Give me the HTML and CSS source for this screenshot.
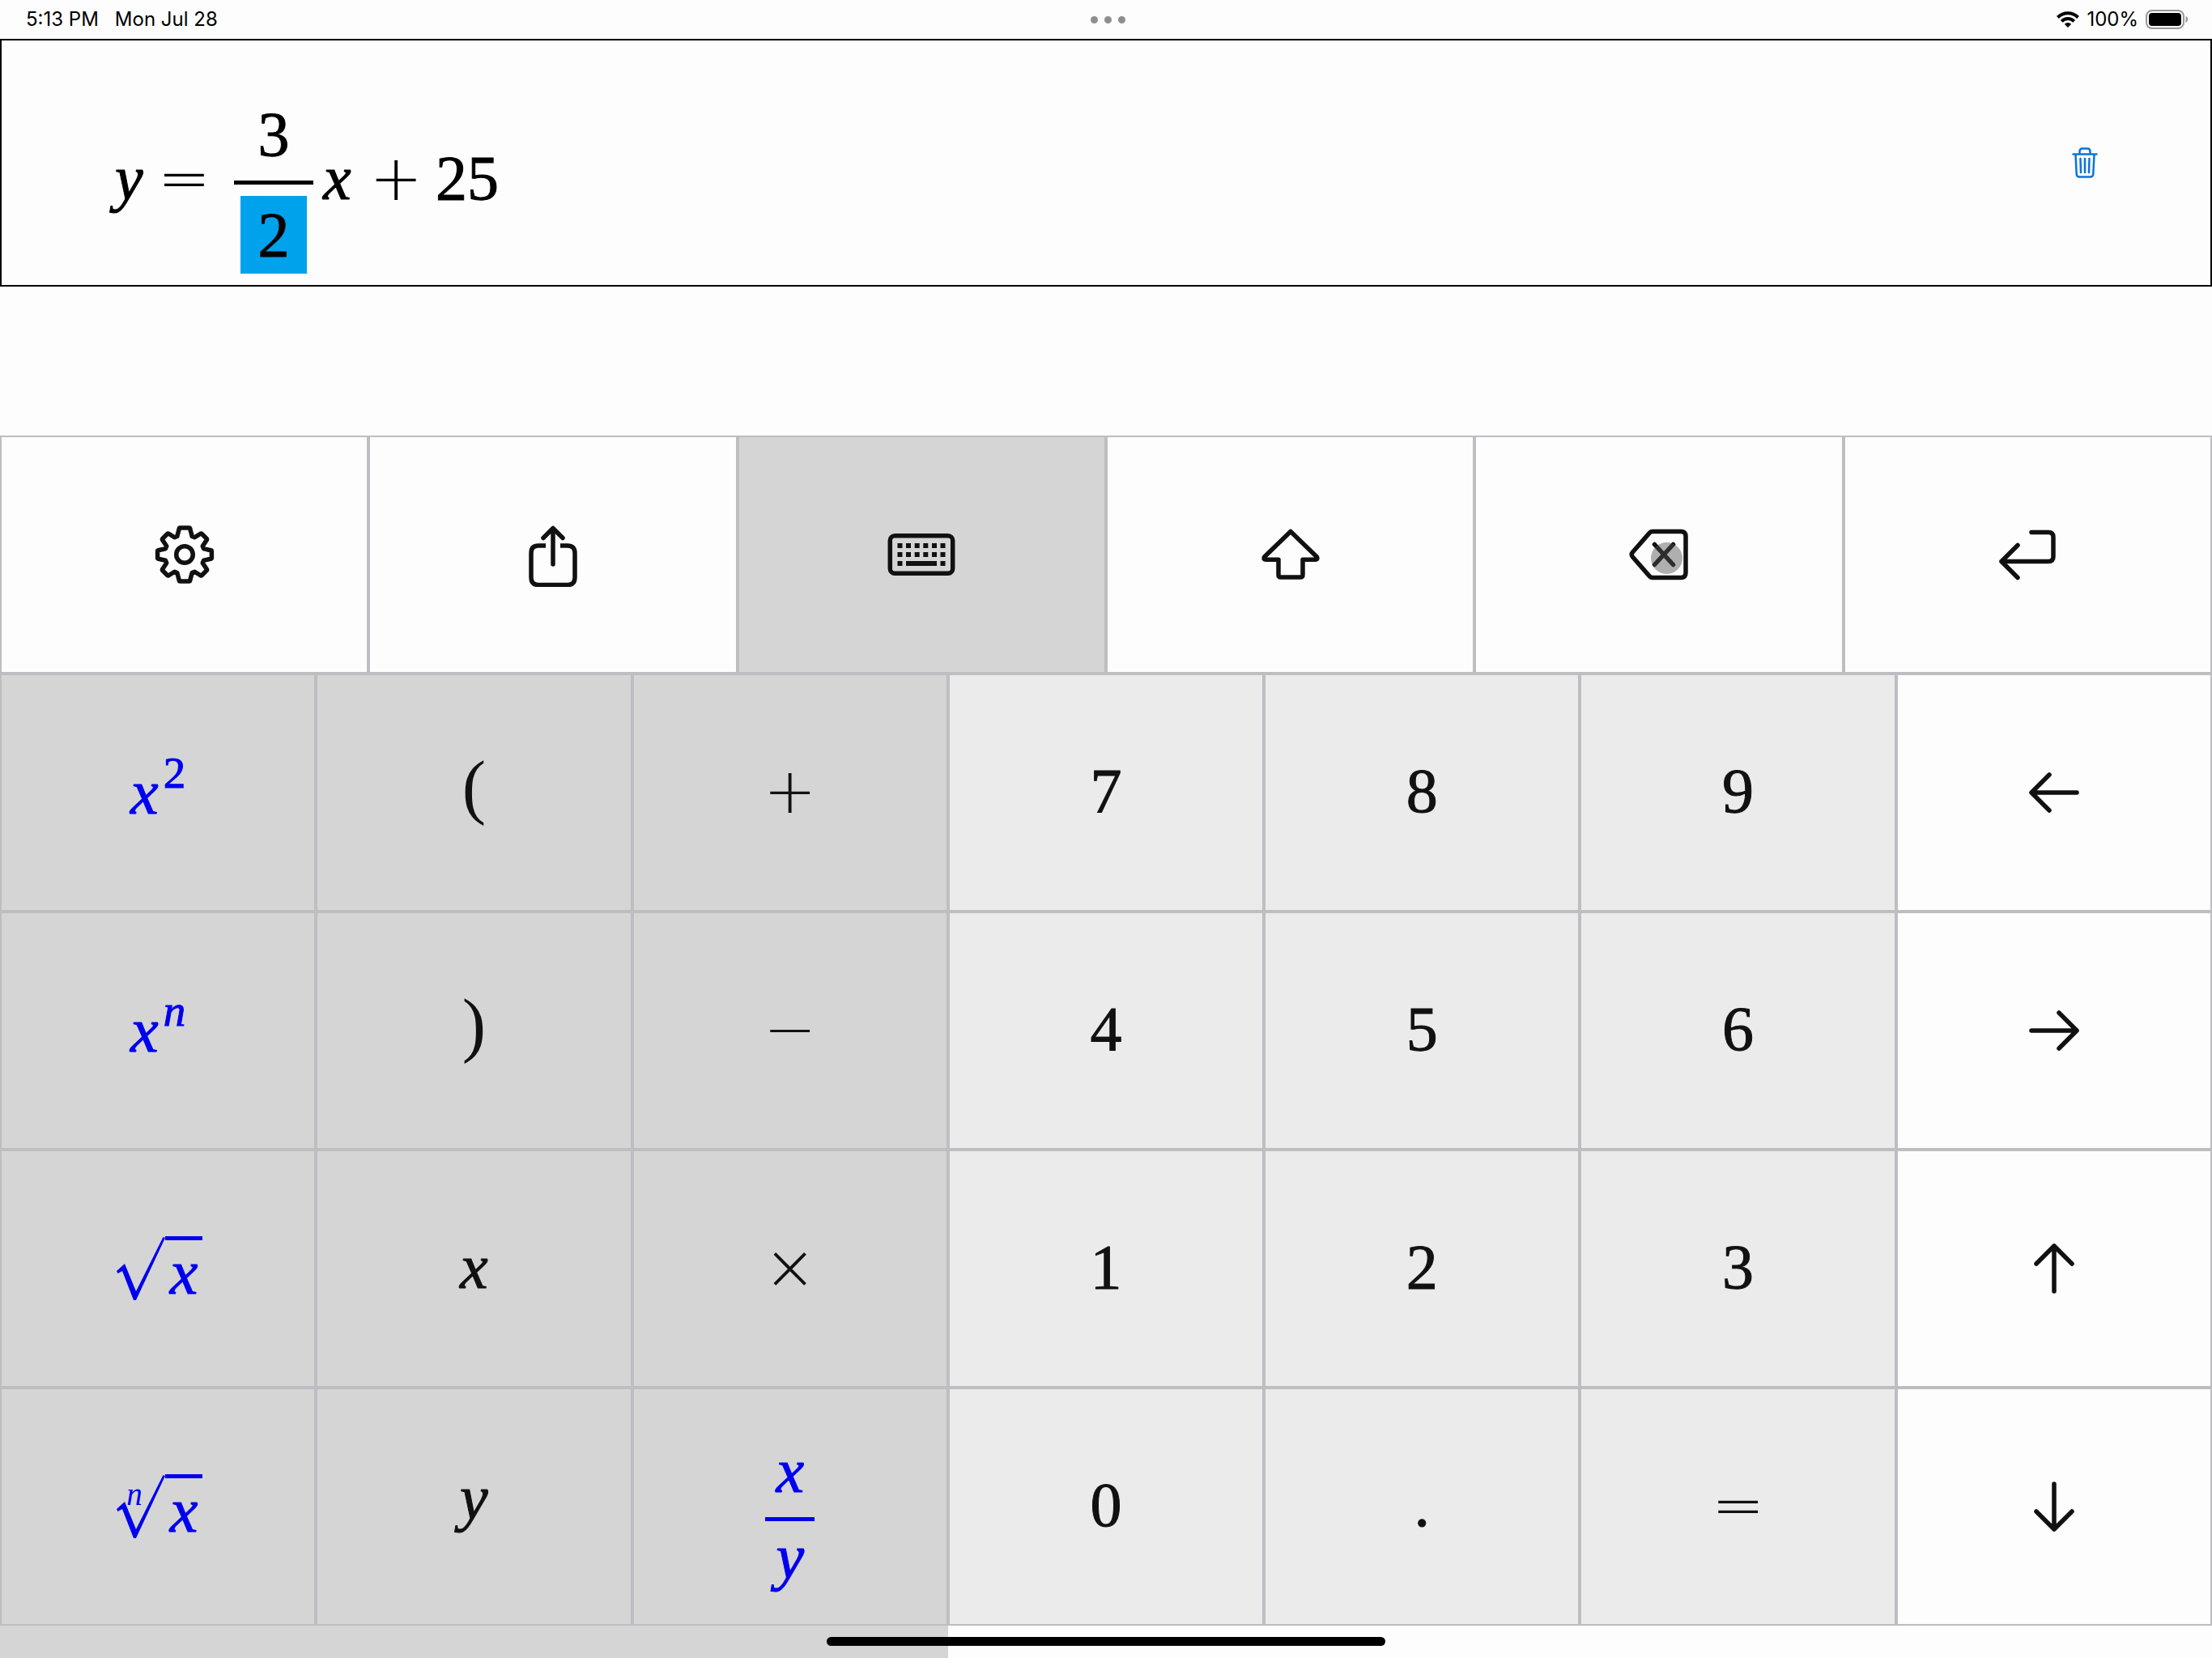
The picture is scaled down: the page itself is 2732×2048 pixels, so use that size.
FILE: index.html
```html
<!DOCTYPE html>
<html lang="en">
<head>
<meta charset="utf-8">
<meta name="viewport" content="width=device-width, initial-scale=1">
<title>Equation editor</title>
<link rel="stylesheet" href="styles.css">
</head>
<body>
<div class="app">
  <header class="status">
    <div class="status-left"><span>5:13 PM</span><span>Mon Jul 28</span></div>
    <div class="dots"><i></i><i></i><i></i></div>
    <div class="status-right">
      <svg width="28" height="20" viewBox="0 0 28 20" aria-hidden="true"><g fill="none" stroke="#000" stroke-width="4"><path d="M1.500 7.500a17.500 17.500 0 0 1 25 0"/><path d="M6.300 12.300a10.800 10.800 0 0 1 15.400 0"/></g><path d="M14 20l-4.200-4.300a6 6 0 0 1 8.400 0z"/></svg>
      <span>100%</span>
      <svg class="battery" width="54" height="24" viewBox="0 0 54 24" aria-hidden="true"><rect x="1" y="1" width="46" height="22" rx="7" fill="none" stroke="#999" stroke-width="2"/><rect x="4" y="4" width="40" height="16" rx="4"/><path d="M49.500 8c3.500 1 3.500 7 0 8z" fill="#999"/></svg>
    </div>
  </header>

  <main class="editor">
    <div class="equation">
      <span class="var">y</span>
      <span class="op eq">=</span>
      <span class="frac"><span class="num">3</span><span class="den"><mark>2</mark></span></span>
      <span class="var">x</span>
      <span class="op plus">+</span>
      <span>25</span>
    </div>
    <button class="trash" aria-label="Delete equation">
      <svg width="32" height="38" viewBox="0 0 32 38" fill="none" stroke="#0b74dc" stroke-width="2.500" stroke-linecap="round" stroke-linejoin="round"><path d="M1.500 8.500h29M9.500 8V5q0-3.500 3.500-3.500h6q3.500 0 3.500 3.500v3M4.500 9l1.200 24q.2 3.500 3.500 3.500h13.600q3.300 0 3.500-3.500l1.200-24M10.500 14l.5 17M16 14v17M21.500 14l-.5 17"/></svg>
    </button>
  </main>

  <section class="keyboard" aria-label="Math keyboard">
    <div class="tools">
      <button class="key" aria-label="Settings"><svg class="icon" viewBox="-38 -38 76 76"><circle r="10.300"/><path d="M-5.500-33h11q1 0 1.200 1l2.500 9.500 3.200 1.300 7.200-4.600q1-.5 1.800.3l5.700 5.700q.8.800.2 1.800l-5 7.600 1.300 3.200 8.800 1.900q1 .2 1 1.200v8.200q0 1-1 1.200l-8.800 1.900-1.300 3.200 5 7.600q.6 1-.2 1.800l-5.700 5.700q-.8.800-1.800.3l-7.200-4.600-3.200 1.300-2.500 9.500q-.2 1-1.200 1h-11q-1 0-1.200-1l-2.500-9.500-3.200-1.300-7.200 4.600q-1 .5-1.800-.3l-5.700-5.700q-.8-.8-.2-1.800l5-7.600-1.300-3.200-8.800-1.900q-1-.2-1-1.200v-8.200q0-1 1-1.200l8.800-1.900 1.300-3.200-5-7.600q-.6-1 .2-1.800l5.700-5.700q.8-.8 1.800-.3l7.200 4.600 3.200-1.300 2.500-9.500q.2-1 1.200-1z"/></svg></button>
      <button class="key" aria-label="Share"><svg class="icon tall" viewBox="-38 -40 76 80"><path d="M0-31V12M-12-20.500L0-32.500l12 12"/><path stroke-linecap="butt" d="M-9-11h-9q-9 0-9 9v30.500q0 9 9 9h36q9 0 9-9V-2q0-9-9-9H9"/></svg></button>
      <button class="key dark" aria-label="Keyboard" aria-pressed="true"><svg class="icon wide" viewBox="-43 -38 86 76"><rect x="-38.700" y="-23.200" width="77.400" height="46.400" rx="6"/><g class="solid"><path d="M-29.500-14h6v6h-6zM-19-14h6v6h-6zM-8.300-14h6v6h-6zM2.300-14h6v6h-6zM13-14h6v6h-6zM23.500-14h6v6h-6zM-29.500-3h6v6h-6zM-19-3h6v6h-6zM-8.300-3h6v6h-6zM2.300-3h6v6h-6zM13-3h6v6h-6zM23.500-3h6v6h-6zM-29.500 8h6v6h-6zM-19 8h38v6h-38zM23.500 8h6v6h-6z"/></g></svg></button>
      <button class="key" aria-label="Shift"><svg class="icon" viewBox="-38 -38 76 76"><path d="M0-28.500L32.500 3q1.500 3.200-1.500 3.200H15V25q0 3-3 3H-12q-3 0-3-3V6.200h-16q-3 0-1.500-3.200z"/></svg></button>
      <button class="key" aria-label="Backspace"><svg class="icon" viewBox="-38 -38 76 76"><path d="M-8-28.500h35q6 0 6 6v45q0 6-6 6H-8q-2 0-3.500-1.500L-32.500 3q-2.500-3 0-6l21-24q1.500-1.500 3.500-1.500zM-5.500-12.500l23 25M17.500-12.500l-23 25"/></svg><span class="touch"></span></button>
      <button class="key" aria-label="Return"><svg class="icon" viewBox="-38 -38 76 76"><path d="M5-27.500h21q6 0 6 6v24q0 6-6 6h-58M-12-11.500l-20 20 20 20"/></svg></button>
    </div>
    <div class="pad">
      <button class="key dark fn"><span class="var">x</span><sup>2</sup></button>
      <button class="key dark paren">(</button>
      <button class="key dark op">+</button>
      <button class="key light">7</button>
      <button class="key light">8</button>
      <button class="key light">9</button>
      <button class="key" aria-label="Left"><svg class="icon" viewBox="-38 -38 76 76"><path d="M28 0h-56M-6-22l-22 22 22 22"/></svg></button>

      <button class="key dark fn"><span class="var">x</span><sup class="var">n</sup></button>
      <button class="key dark paren">)</button>
      <button class="key dark op">−</button>
      <button class="key light">4</button>
      <button class="key light">5</button>
      <button class="key light">6</button>
      <button class="key" aria-label="Right"><svg class="icon" viewBox="-38 -38 76 76"><path d="M-28 0h56M6-22l22 22-22 22"/></svg></button>

      <button class="key dark fn"><span class="root"><svg width="60" height="80" viewBox="0 0 60 80"><path d="M0 43l10-9 14 34L57.500 1l2.500 1-36 77h-3L7 43l-5.500 3z"/></svg><span class="var radicand">x</span></span></button>
      <button class="key dark var">x</button>
      <button class="key dark op">×</button>
      <button class="key light">1</button>
      <button class="key light">2</button>
      <button class="key light">3</button>
      <button class="key" aria-label="Up"><svg class="icon" viewBox="-38 -38 76 76"><path d="M0 28v-56M-22-6l22-22 22 22"/></svg></button>

      <button class="key dark fn"><span class="root"><svg width="60" height="80" viewBox="0 0 60 80"><path d="M0 43l10-9 14 34L57.500 1l2.500 1-36 77h-3L7 43l-5.500 3z"/></svg><span class="var index">n</span><span class="var radicand">x</span></span></button>
      <button class="key dark var descender">y</button>
      <button class="key dark fn"><span class="ratio var"><span>x</span><span>y</span></span></button>
      <button class="key light">0</button>
      <button class="key light">.</button>
      <button class="key light op">=</button>
      <button class="key" aria-label="Down"><svg class="icon" viewBox="-38 -38 76 76"><path d="M0-28v56M-22 6l22 22 22-22"/></svg></button>
    </div>
  </section>
  <footer class="home"><span class="indicator"></span></footer>
</div>
</body>
</html>
```

FILE: styles.css
```css
* { box-sizing: border-box; }
body { margin: 0; background: #fdfdfd; color: #000; }

.app {
  min-height: 100vh;
  display: flex;
  flex-direction: column;
  font-family: "Liberation Serif", serif;
  font-size: 78px;
}

/* status bar */
.status {
  height: 48px;
  padding: 0 28px 0 32px;
  display: grid;
  grid-template-columns: 1fr auto 1fr;
  align-items: center;
  font: 400 24px/48px Inter, sans-serif;
  -webkit-text-stroke: 0;
}
.status-left { display: flex; gap: 20px; }
.status-right { display: flex; align-items: center; justify-content: flex-end; gap: 9px; }
.dots { display: flex; gap: 8px; }
.dots i { width: 9px; height: 9px; border-radius: 50%; background: #8e8e8e; }

/* equation */
.editor {
  border: 2px solid #000;
  display: flex;
  align-items: center;
  justify-content: space-between;
  padding: 0 133px 0 140px;
}
.equation {
  display: flex;
  align-items: center;
  padding: 51px 0 14px;
  line-height: 96px;
  -webkit-text-stroke: 1px currentColor;
}
.var { font-style: italic; }
.op { font-family: "DejaVu Sans", sans-serif; font-weight: 200; -webkit-text-stroke: 0; }
.eq { margin: 0 29px 0 18px; }
.plus { margin: 0 16px 0 23px; }
.frac { display: flex; flex-direction: column; align-items: center; margin-right: 12px; }
.num {
  width: 98px;
  text-align: center;
  padding: 17px 0 9px;
  border-bottom: 5px solid #000;
}
.den { padding-top: 14px; }
.den mark { display: block; width: 82px; text-align: center; background: #00a2ec; color: #000; }

.trash {
  width: 44px;
  height: 44px;
  display: flex;
  align-items: center;
  justify-content: center;
  padding: 0;
  border: 0;
  background: none;
}

/* keyboard */
.keyboard {
  margin-top: 184px;
  flex: 1;
  display: grid;
  grid-template-rows: 1fr 4fr;
}
.tools { display: grid; grid-template-columns: repeat(6, 1fr); }
.pad { display: grid; grid-template-columns: repeat(7, 1fr); grid-template-rows: repeat(4, 1fr); }
.key {
  position: relative;
  min-width: 0;
  min-height: 0;
  display: flex;
  align-items: center;
  justify-content: center;
  padding: 0;
  border: 2px solid #bebec2;
  background: #fdfdfd;
  color: #111;
  font-family: inherit;
  font-size: inherit;
  line-height: 96px;
  -webkit-text-stroke: 1px currentColor;
}
.key.op { font-family: "DejaVu Sans", sans-serif; -webkit-text-stroke: 0; }
.key.dark { background: #d5d5d5; }
.key.light { background: #ebebeb; }
.pad .dark, .pad .light { padding-bottom: 4px; }
.pad .fn { color: #00e; padding: 0; -webkit-text-stroke: 1px #00e; }
.pad .paren { font-size: 88px; padding-bottom: 14px; -webkit-text-stroke: 0; }
.pad .descender { padding-bottom: 22px; }

.icon { width: 76px; height: 76px; fill: none; stroke: #111; stroke-width: 5.500; stroke-linecap: round; stroke-linejoin: round; }
.icon.wide { width: 86px; }
.icon.tall { height: 80px; }
.solid { fill: #111; stroke: none; }
.touch {
  position: absolute;
  left: calc(50% - 10px);
  top: calc(50% - 15px);
  width: 39px;
  height: 39px;
  border-radius: 50%;
  background: rgba(80, 80, 80, .45);
}

sup { font-size: 55px; line-height: 64px; margin: 0 0 48px 6px; }

.root { display: flex; position: relative; height: 80px; padding-left: 4px; box-sizing: content-box; }
.radicand { border-top: 5px solid currentColor; width: 46px; line-height: 80px; text-align: center; }
.root path { fill: currentColor; }
.index { position: absolute; left: 16px; top: 5px; font-size: 39px; line-height: 40px; -webkit-text-stroke: 0; }

.ratio { display: flex; flex-direction: column; width: 61px; padding-top: 18px; text-align: center; line-height: 76px; }
.ratio span { padding-bottom: 19px; }
.ratio span + span { border-top: 5px solid currentColor; padding: 6px 0 0; }

.home {
  height: 40px;
  padding-top: 14px;
  background: linear-gradient(90deg, #d5d5d5 42.857%, #fdfdfd 42.857%);
}
.indicator { display: block; width: 690px; height: 11px; margin: 0 auto; border-radius: 6px; background: #000; }
```
